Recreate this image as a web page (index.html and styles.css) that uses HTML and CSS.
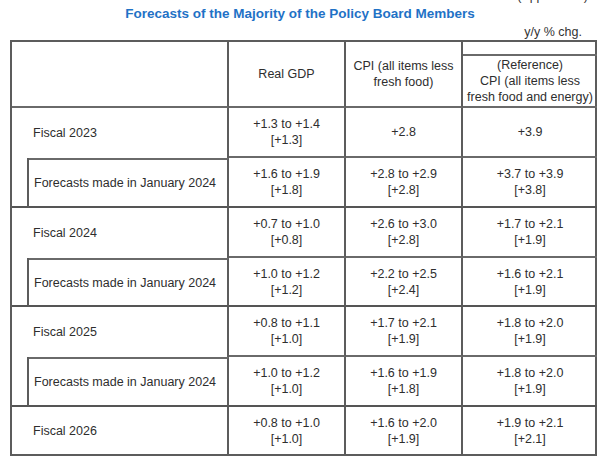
FILE: index.html
```html
<!DOCTYPE html>
<html lang="en">
<head>
<meta charset="utf-8">
<title>Forecasts of the Majority of the Policy Board Members</title>
<link rel="stylesheet" href="styles.css">
</head>
<body>
<div class="page">
  <div class="appendix">(Appendix 1)</div>
  <h1 class="title">Forecasts of the Majority of the Policy Board Members</h1>
  <div class="unit">y/y % chg.</div>
  <div class="grid">
    <div class="c hd-blank"></div>
    <div class="c hd span2">Real GDP</div>
    <div class="c hd span2">CPI (all items less<br>fresh food)</div>
    <div class="c hd-top"></div>
    <div class="c hd ref">(Reference)<br>CPI (all items less<br>fresh food and energy)</div>

    <div class="c label fiscal">Fiscal 2023</div>
    <div class="c num">+1.3 to +1.4<br>[+1.3]</div>
    <div class="c num">+2.8</div>
    <div class="c num last">+3.9</div>
    <div class="c indent grp"></div>
    <div class="c label fc grp">Forecasts made in January 2024</div>
    <div class="c num grp">+1.6 to +1.9<br>[+1.8]</div>
    <div class="c num grp">+2.8 to +2.9<br>[+2.8]</div>
    <div class="c num grp last">+3.7 to +3.9<br>[+3.8]</div>

    <div class="c label fiscal">Fiscal 2024</div>
    <div class="c num">+0.7 to +1.0<br>[+0.8]</div>
    <div class="c num">+2.6 to +3.0<br>[+2.8]</div>
    <div class="c num last">+1.7 to +2.1<br>[+1.9]</div>
    <div class="c indent grp"></div>
    <div class="c label fc grp">Forecasts made in January 2024</div>
    <div class="c num grp">+1.0 to +1.2<br>[+1.2]</div>
    <div class="c num grp">+2.2 to +2.5<br>[+2.4]</div>
    <div class="c num grp last">+1.6 to +2.1<br>[+1.9]</div>

    <div class="c label fiscal">Fiscal 2025</div>
    <div class="c num">+0.8 to +1.1<br>[+1.0]</div>
    <div class="c num">+1.7 to +2.1<br>[+1.9]</div>
    <div class="c num last">+1.8 to +2.0<br>[+1.9]</div>
    <div class="c indent grp"></div>
    <div class="c label fc grp">Forecasts made in January 2024</div>
    <div class="c num grp">+1.0 to +1.2<br>[+1.0]</div>
    <div class="c num grp">+1.6 to +1.9<br>[+1.8]</div>
    <div class="c num grp last">+1.8 to +2.0<br>[+1.9]</div>

    <div class="c label fiscal end">Fiscal 2026</div>
    <div class="c num end">+0.8 to +1.0<br>[+1.0]</div>
    <div class="c num end">+1.6 to +2.0<br>[+1.9]</div>
    <div class="c num end last">+1.9 to +2.1<br>[+2.1]</div>
  </div>
</div>
</body>
</html>
```

FILE: styles.css
```css
* { box-sizing: border-box; }
html, body { margin: 0; padding: 0; background: #fff; }
body {
  font-family: "Liberation Sans", Arial, sans-serif;
  color: #2e2e2e;
  font-size: 12.5px;
}
.page {
  width: 600px;
  height: 459px;
  overflow: hidden;
  position: relative;
}
.appendix {
  position: absolute;
  top: -11px;
  right: 12px;
  font-size: 12.5px;
  color: #333;
}
.title {
  margin: 0;
  padding-top: 6px;
  height: 21px;
  font-size: 13.5px;
  font-weight: bold;
  color: #1f72c6;
  text-align: center;
  line-height: 15px;
}
.unit {
  height: 19px;
  text-align: right;
  padding-right: 18px;
  line-height: 14px;
  padding-top: 4px;
  font-size: 12.5px;
  color: #333;
}
.grid {
  margin-left: 10px;
  width: 587px;
  display: grid;
  grid-template-columns: 17px 200px 117px 117px 134px;
  grid-template-rows: 14px 52px 50px 50px 50px 49px 50px 50px 47px;
  border: 2px solid #5c5c5c;
}
.c {
  display: flex;
  align-items: center;
  border-right: 2px solid #5c5c5c;
  border-bottom: 2px solid #6a6a6a;
  line-height: 16px;
}
.c.last { border-right: none; }
.hd-blank { grid-column: 1 / 3; grid-row: span 2; }
.span2 { grid-row: span 2; }
.hd { justify-content: center; text-align: center; }
.hd-top { border-right: none; }
.ref { border-right: none; align-items: center; padding-top: 0; white-space: nowrap; }
.label { padding-left: 5px; white-space: nowrap; }
.fiscal { grid-column: 1 / 3; padding-left: 21px; border-bottom: none; }
.indent { border-right: 2px solid #5c5c5c; }
.fc { border-top: 2px solid #6a6a6a; }
.num { justify-content: center; text-align: center; }
.grp { border-bottom-color: #555; }
.end { border-bottom: none; }
```
